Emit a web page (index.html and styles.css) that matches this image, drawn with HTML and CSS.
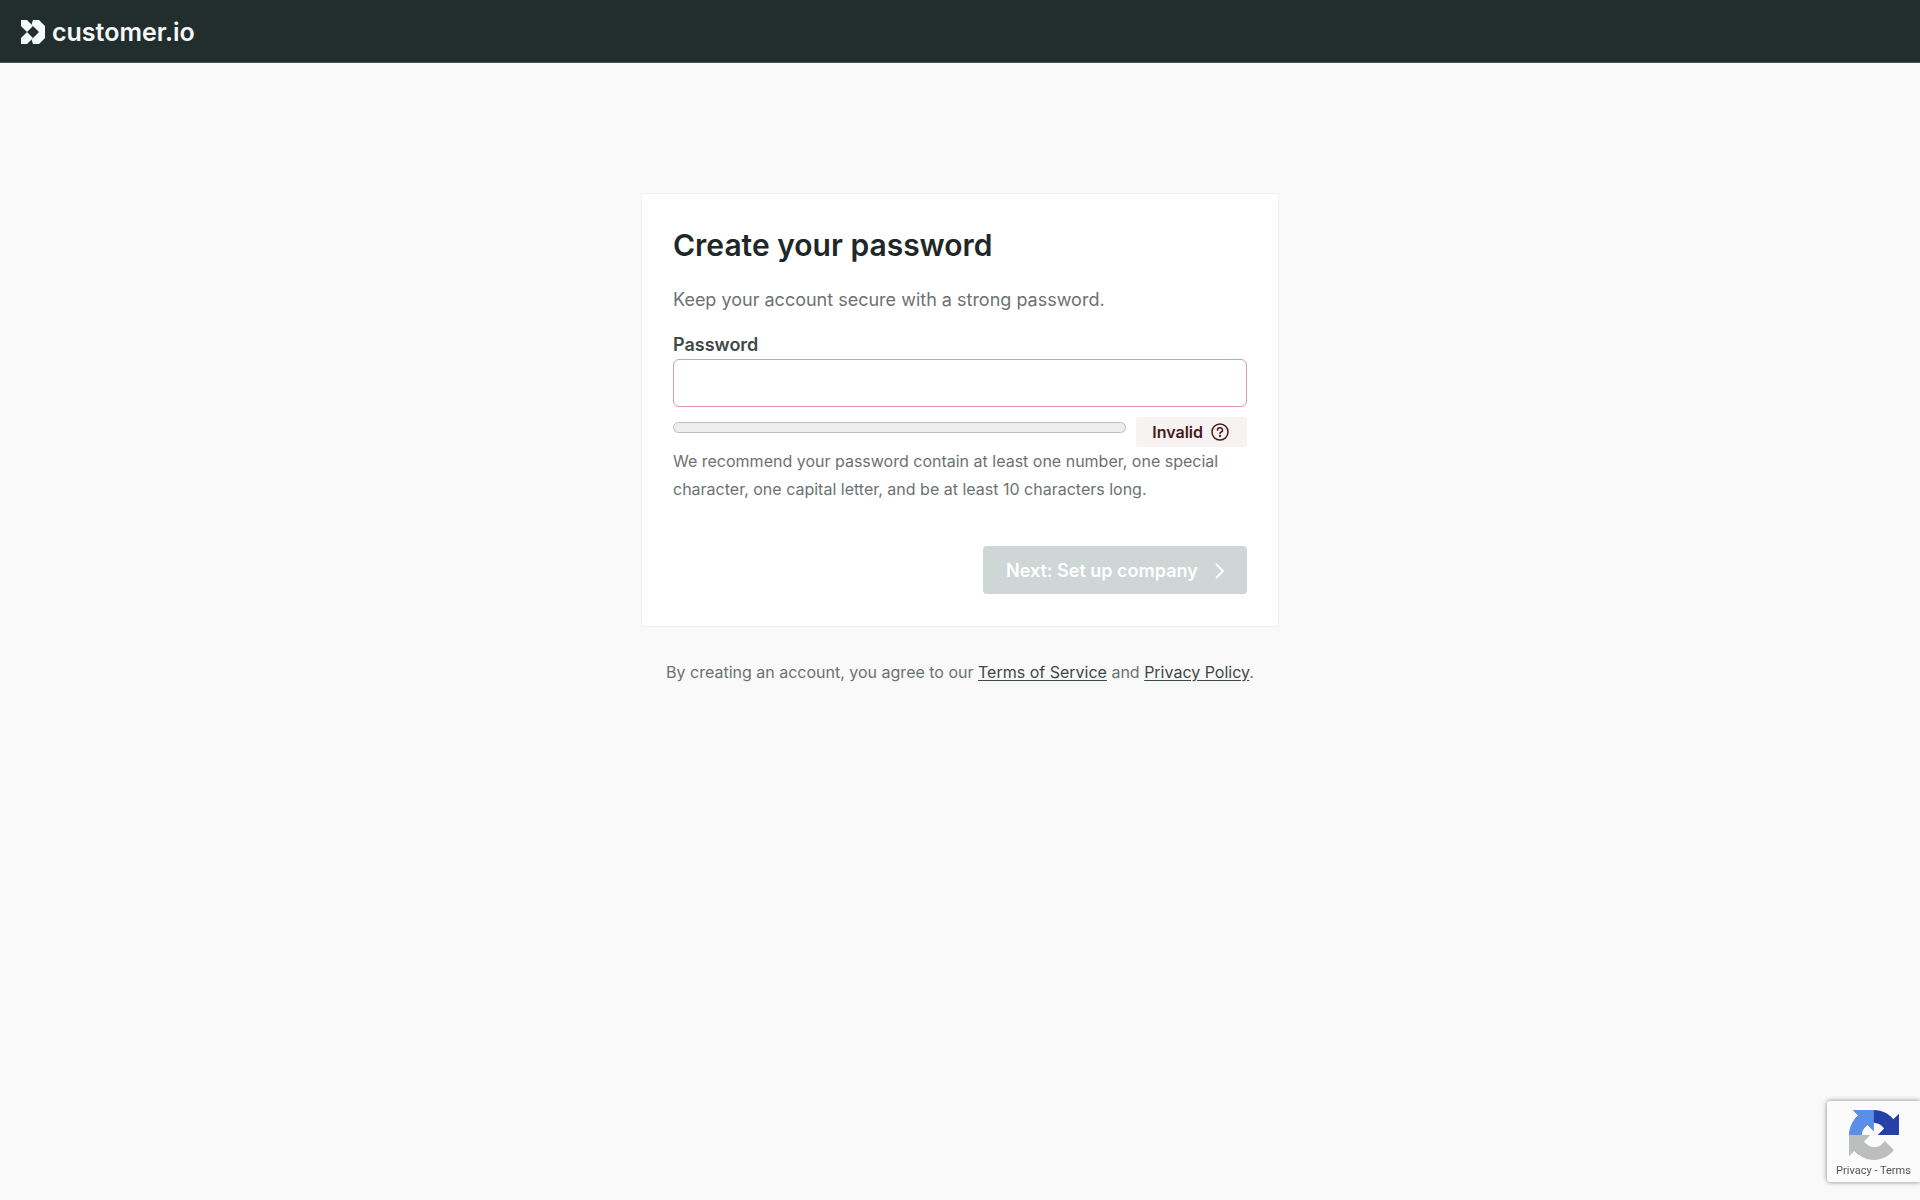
FILE: index.html
```html
<!DOCTYPE html>
<html lang="en">
<head>
<meta charset="utf-8">
<title>Create your password</title>
<link rel="stylesheet" href="styles.css">
</head>
<body>
<header class="topbar">
  <a class="brand" href="#">
    <svg class="brand-mark" viewBox="0 0 24 24" aria-hidden="true">
      <path fill="#f6f9f9" fill-rule="evenodd" d="M0 0H6L12 6L16 0H18L24 6V18L18 24H16L12 18L6 24H0V18L6 12L0 6ZM12 6L6 12L12 18L18 12Z"/>
      <path fill="#f6f9f9" d="M12 0H18V9L12 6L10.500 4.500ZM12 24H18V15L12 18L10.500 19.500Z"/>
    </svg>
    <span class="brand-name">customer.io</span>
  </a>
</header>
<main class="page">
  <form class="card">
    <h1 class="title">Create your password</h1>
    <p class="lead">Keep your account secure with a strong password.</p>
    <label class="label" for="password">Password</label>
    <input class="input" id="password" type="password" aria-describedby="hint">
    <div class="strength">
      <div class="meter"></div>
      <span class="status">Invalid
        <svg class="help" viewBox="0 0 18 18" fill="none" stroke="#45191b" stroke-width="1.500" stroke-linecap="round" aria-hidden="true">
          <circle cx="9" cy="9" r="8"/>
          <path d="M6.500 7.200A2.500 2.300 0 1 1 9.900 9.200Q9 9.600 9 10.600"/>
          <circle cx="9" cy="13" r=".4"/>
        </svg>
      </span>
    </div>
    <p class="hint" id="hint">We recommend your password contain at least one number, one special character, one capital letter, and be at least 10 characters long.</p>
    <button class="next" type="submit" disabled>Next: Set up company
      <svg class="chevron" viewBox="0 0 10 16" fill="none" stroke="#fff" stroke-width="2" aria-hidden="true"><path d="M1 2L8 9L1 16"/></svg>
    </button>
  </form>
  <p class="legal">By creating an account, you agree to our <a href="#">Terms of Service</a> and <a href="#">Privacy Policy</a>.</p>
</main>
<aside class="captcha">
  <svg class="captcha-logo" viewBox="0 0 64 64" aria-hidden="true">
    <path fill="#2540a8" d="M64 31.955l-.033-1.370V4.687l-7.160 7.160C50.948 4.674 42.033.093 32.050.093c-10.400 0-19.622 4.960-25.458 12.640l11.736 11.860a15.550 15.550 0 0 1 4.754-5.334c2.050-1.600 4.952-2.906 8.968-2.906.485 0 .860.057 1.135.163 4.976.393 9.288 3.140 11.828 7.124l-8.307 8.307L64 31.953"/>
    <path fill="#5a8fe8" d="M31.862.094l-1.370.033H4.594l7.160 7.160C4.580 13.147 0 22.060 0 32.046c0 10.400 4.960 19.622 12.640 25.458L24.500 45.768a15.550 15.550 0 0 1-5.334-4.754c-1.600-2.050-2.906-4.952-2.906-8.968 0-.485.057-.860.163-1.135.393-4.976 3.140-9.288 7.124-11.828l8.307 8.307L31.860.095"/>
    <path fill="#bcbebe" d="M.001 32.045l.033 1.370v25.898l7.160-7.160c5.860 7.173 14.774 11.754 24.760 11.754 10.400 0 19.622-4.960 25.458-12.640l-11.736-11.860a15.550 15.550 0 0 1-4.754 5.334c-2.050 1.600-4.952 2.906-8.968 2.906-.485 0-.860-.057-1.135-.163-4.976-.393-9.288-3.140-11.828-7.124l8.307-8.307c-10.522.040-22.400.066-27.295-.005"/>
  </svg>
  <p class="captcha-links"><a href="#">Privacy</a> - <a href="#">Terms</a></p>
</aside>
</body>
</html>
```
FILE: styles.css
```css
* { box-sizing: border-box; }

body {
  margin: 0;
  min-height: 100vh;
  background: #f9f9f9;
  color: #6c7271;
  font-family: Inter, sans-serif;
  font-size: 16px;
}

h1, p { margin: 0; }

.topbar {
  display: flex;
  align-items: center;
  height: 63px;
  padding: 2px 21px 0;
  background: #222d2e;
  border-bottom: 1px solid #4b5354;
}

.brand {
  display: flex;
  align-items: center;
  gap: 7px;
  color: #f6f9f9;
  text-decoration: none;
}

.brand-mark { width: 24px; height: 24px; }

.brand-name {
  font-size: 25px;
  font-weight: 600;
  line-height: 32px;
}

.page {
  display: flex;
  flex-direction: column;
  align-items: center;
  padding: 130px 16px 32px;
}

.card {
  display: flex;
  flex-direction: column;
  width: 100%;
  max-width: 638px;
  padding: 31px;
  background: #fff;
  border: 1px solid #f1f2f2;
  border-radius: 4px;
}

.title {
  color: #1f2829;
  font-size: 30px;
  font-weight: 600;
  line-height: 40px;
}

.lead {
  margin-top: 21px;
  font-size: 18px;
  line-height: 28px;
}

.label {
  margin-top: 16px;
  color: #414948;
  font-size: 18px;
  font-weight: 600;
  line-height: 29px;
}

.input {
  height: 48px;
  padding: 0 16px;
  background: #fff;
  border: 1px solid #dc9ca0;
  border-radius: 6px;
  font: inherit;
}

.strength {
  display: flex;
  align-items: flex-start;
  gap: 10px;
  margin-top: 10px;
}

.meter {
  flex: 1;
  height: 11px;
  margin-top: 5px;
  background: #eceeed;
  border: 1px solid #bcbebd;
  border-radius: 6px;
}

.status {
  display: flex;
  align-items: center;
  gap: 8px;
  height: 30px;
  padding: 0 18px 0 16px;
  background: #f7f3f2;
  border-radius: 4px;
  color: #45191b;
  font-weight: 600;
}

.help { width: 18px; height: 18px; }

.hint {
  font-size: 16px;
  line-height: 28px;
}

.next {
  display: flex;
  align-items: center;
  align-self: flex-end;
  justify-content: space-between;
  min-width: 264px;
  height: 48px;
  margin: 43px 0 1px;
  padding: 0 22px 0 23px;
  background: #ced6d6;
  border: 0;
  border-radius: 4px;
  color: #fff;
  font: inherit;
  font-size: 18px;
  font-weight: 600;
}

.chevron { width: 10px; height: 16px; overflow: visible; }

.legal {
  margin-top: 31px;
  font-size: 16px;
  line-height: 28px;
}

.legal a {
  color: #3f4746;
  text-underline-offset: 2px;
}

.captcha {
  position: fixed;
  right: 0;
  bottom: 18px;
  display: flex;
  flex-direction: column;
  align-items: center;
  width: 93px;
  height: 81px;
  padding-top: 9px;
  background: #fbfbfb;
  border-radius: 3px 0 0 3px;
  box-shadow: 0 0 5px #808080;
}

.captcha-logo { width: 50px; height: 50px; }

.captcha-links {
  margin-top: 5px;
  color: #555;
  font-family: Roboto, sans-serif;
  font-size: 11px;
  line-height: 12px;
}

.captcha-links a {
  color: inherit;
  text-decoration: none;
}
```
